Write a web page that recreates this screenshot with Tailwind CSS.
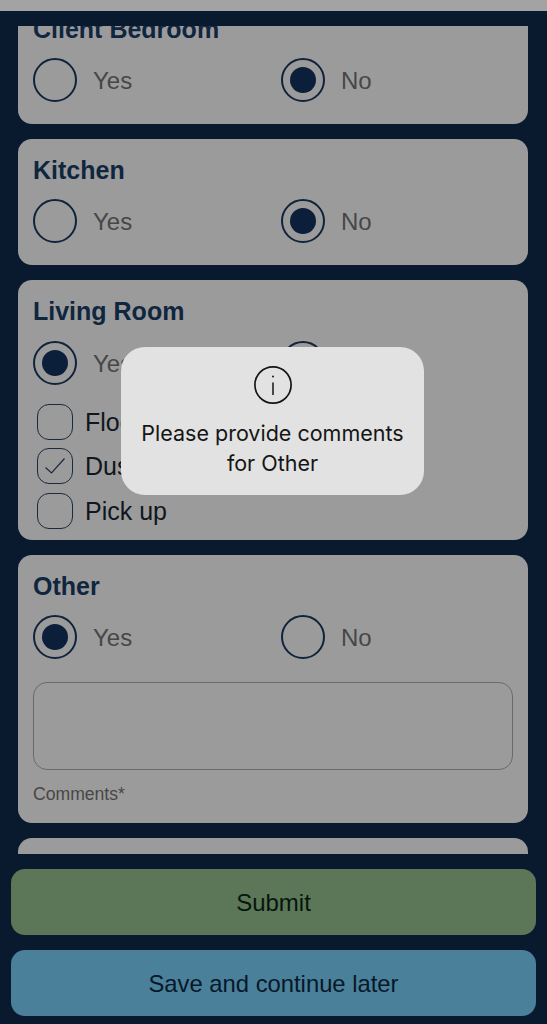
<!DOCTYPE html>
<html lang="en">
<head>
    <meta charset="UTF-8">
    <title>Checklist</title>
    <meta name="viewport" content="width=device-width, initial-scale=1.0">
    <script src="https://cdn.jsdelivr.net/npm/@tailwindcss/browser@4"></script>
</head>
<body class="bg-[#0a1a2e] font-['Liberation_Sans',Arial,sans-serif]">
    <div class="relative h-[1024px] w-[547px] overflow-hidden">
        <div class="h-[11px] bg-[#a3a3a3]"></div>
        <div class="h-[15px]"></div>

        <!-- scrolling form -->
        <main class="flex h-[828px] flex-col gap-[15px] overflow-hidden pr-[19px] pl-[18px]">
            <section class="-mt-[28px] h-[126px] shrink-0 rounded-[14px] bg-[#9b9b9b] px-[15px] pt-[17px]">
                <h3 class="text-[25px] leading-[28px] font-bold text-[#10263f]">Client Bedroom</h3>
                <div class="mt-[15px] flex text-[24px] text-[#474747]">
                    <label class="flex w-[248px] items-center gap-4">
                        <span class="size-[44px] rounded-full border-2 border-[#10233b]"></span><span class="mt-[2px]">Yes</span>
                    </label>
                    <label class="flex items-center gap-4">
                        <span class="flex size-[44px] items-center justify-center rounded-full border-2 border-[#10233b]"><span class="size-[26px] rounded-full bg-[#0b1e3a]"></span></span><span class="mt-[2px]">No</span>
                    </label>
                </div>
            </section>

            <section class="h-[126px] shrink-0 rounded-[14px] bg-[#9b9b9b] px-[15px] pt-[17px]">
                <h3 class="text-[25px] leading-[28px] font-bold text-[#10263f]">Kitchen</h3>
                <div class="mt-[15px] flex text-[24px] text-[#474747]">
                    <label class="flex w-[248px] items-center gap-4">
                        <span class="size-[44px] rounded-full border-2 border-[#10233b]"></span><span class="mt-[2px]">Yes</span>
                    </label>
                    <label class="flex items-center gap-4">
                        <span class="flex size-[44px] items-center justify-center rounded-full border-2 border-[#10233b]"><span class="size-[26px] rounded-full bg-[#0b1e3a]"></span></span><span class="mt-[2px]">No</span>
                    </label>
                </div>
            </section>

            <section class="h-[260px] shrink-0 rounded-[14px] bg-[#9b9b9b] px-[15px] pt-[17px]">
                <h3 class="text-[25px] leading-[28px] font-bold text-[#10263f]">Living Room</h3>
                <div class="mt-[16px] flex text-[24px] text-[#474747]">
                    <label class="flex w-[248px] items-center gap-4">
                        <span class="flex size-[44px] items-center justify-center rounded-full border-2 border-[#10233b]"><span class="size-[26px] rounded-full bg-[#0b1e3a]"></span></span><span class="mt-[2px]">Yes</span>
                    </label>
                    <label class="flex items-center gap-4">
                        <span class="size-[44px] rounded-full border-2 border-[#10233b]"></span><span class="mt-[2px]">No</span>
                    </label>
                </div>
                <div class="mt-[19px] flex flex-col gap-[9.5px] pl-1 text-[25px] text-[#10161d]">
                    <label class="flex h-[35px] items-center gap-3">
                        <span class="size-[36px] rounded-[12px] border-[1.5px] border-[#1b2a3c]"></span><span class="mt-[2px]">Floor</span>
                    </label>
                    <label class="flex h-[35px] items-center gap-3">
                        <span class="flex size-[36px] items-center justify-center rounded-[12px] border-[1.5px] border-[#1b2a3c]">
                            <svg width="24" height="24" viewBox="0 0 24 24" fill="none" stroke="#1b2a3c" stroke-width="1.2"><path d="M2.5 13.5l6 5.5L21.5 4.5"/></svg>
                        </span><span class="mt-[2px]">Dusting</span>
                    </label>
                    <label class="flex h-[35px] items-center gap-3">
                        <span class="size-[36px] rounded-[12px] border-[1.5px] border-[#1b2a3c]"></span><span class="mt-[2px]">Pick up</span>
                    </label>
                </div>
            </section>

            <section class="h-[268px] shrink-0 rounded-[14px] bg-[#9b9b9b] px-[15px] pt-[17px]">
                <h3 class="text-[25px] leading-[28px] font-bold text-[#10263f]">Other</h3>
                <div class="mt-[15px] flex text-[24px] text-[#474747]">
                    <label class="flex w-[248px] items-center gap-4">
                        <span class="flex size-[44px] items-center justify-center rounded-full border-2 border-[#10233b]"><span class="size-[26px] rounded-full bg-[#0b1e3a]"></span></span><span class="mt-[2px]">Yes</span>
                    </label>
                    <label class="flex items-center gap-4">
                        <span class="size-[44px] rounded-full border-2 border-[#10233b]"></span><span class="mt-[2px]">No</span>
                    </label>
                </div>
                <div class="mt-[23px] h-[88px] rounded-[14px] border border-[#6a6a6a]"></div>
                <p class="mt-[14px] text-[17.6px] leading-[20px] text-[#474747]">Comments*</p>
            </section>

            <section class="h-[60px] shrink-0 rounded-[14px] bg-[#9b9b9b]"></section>
        </main>

        <!-- footer buttons -->
        <div class="mt-[15px] flex flex-col gap-[15px] px-[11px]">
            <button class="h-[66px] rounded-[14px] bg-[#5b7757] pt-[2px] text-[24px] text-[#08150f]">Submit</button>
            <button class="h-[66px] rounded-[14px] bg-[#4a8099] pt-[2px] text-[23.8px] text-[#07182a]">Save and continue later</button>
        </div>

        <!-- alert -->
        <div class="absolute top-[347px] left-[121px] flex h-[148px] w-[303px] flex-col items-center rounded-[24px] bg-[#e2e2e2] pt-[19px] text-center">
            <svg width="38" height="38" viewBox="0 0 38 38" fill="none" stroke="#151515">
                <circle cx="19" cy="19" r="18.1" stroke-width="1.7"/>
                <path d="M19 16.5V29" stroke-width="1.5"/>
                <circle cx="19" cy="10.5" r="1" fill="#151515" stroke="none"/>
            </svg>
            <p class="mt-[14px] font-['Inter',sans-serif] text-[21.5px] leading-[30px] text-[#151515]">Please provide comments<br>for Other</p>
        </div>
    </div>
</body>
</html>
